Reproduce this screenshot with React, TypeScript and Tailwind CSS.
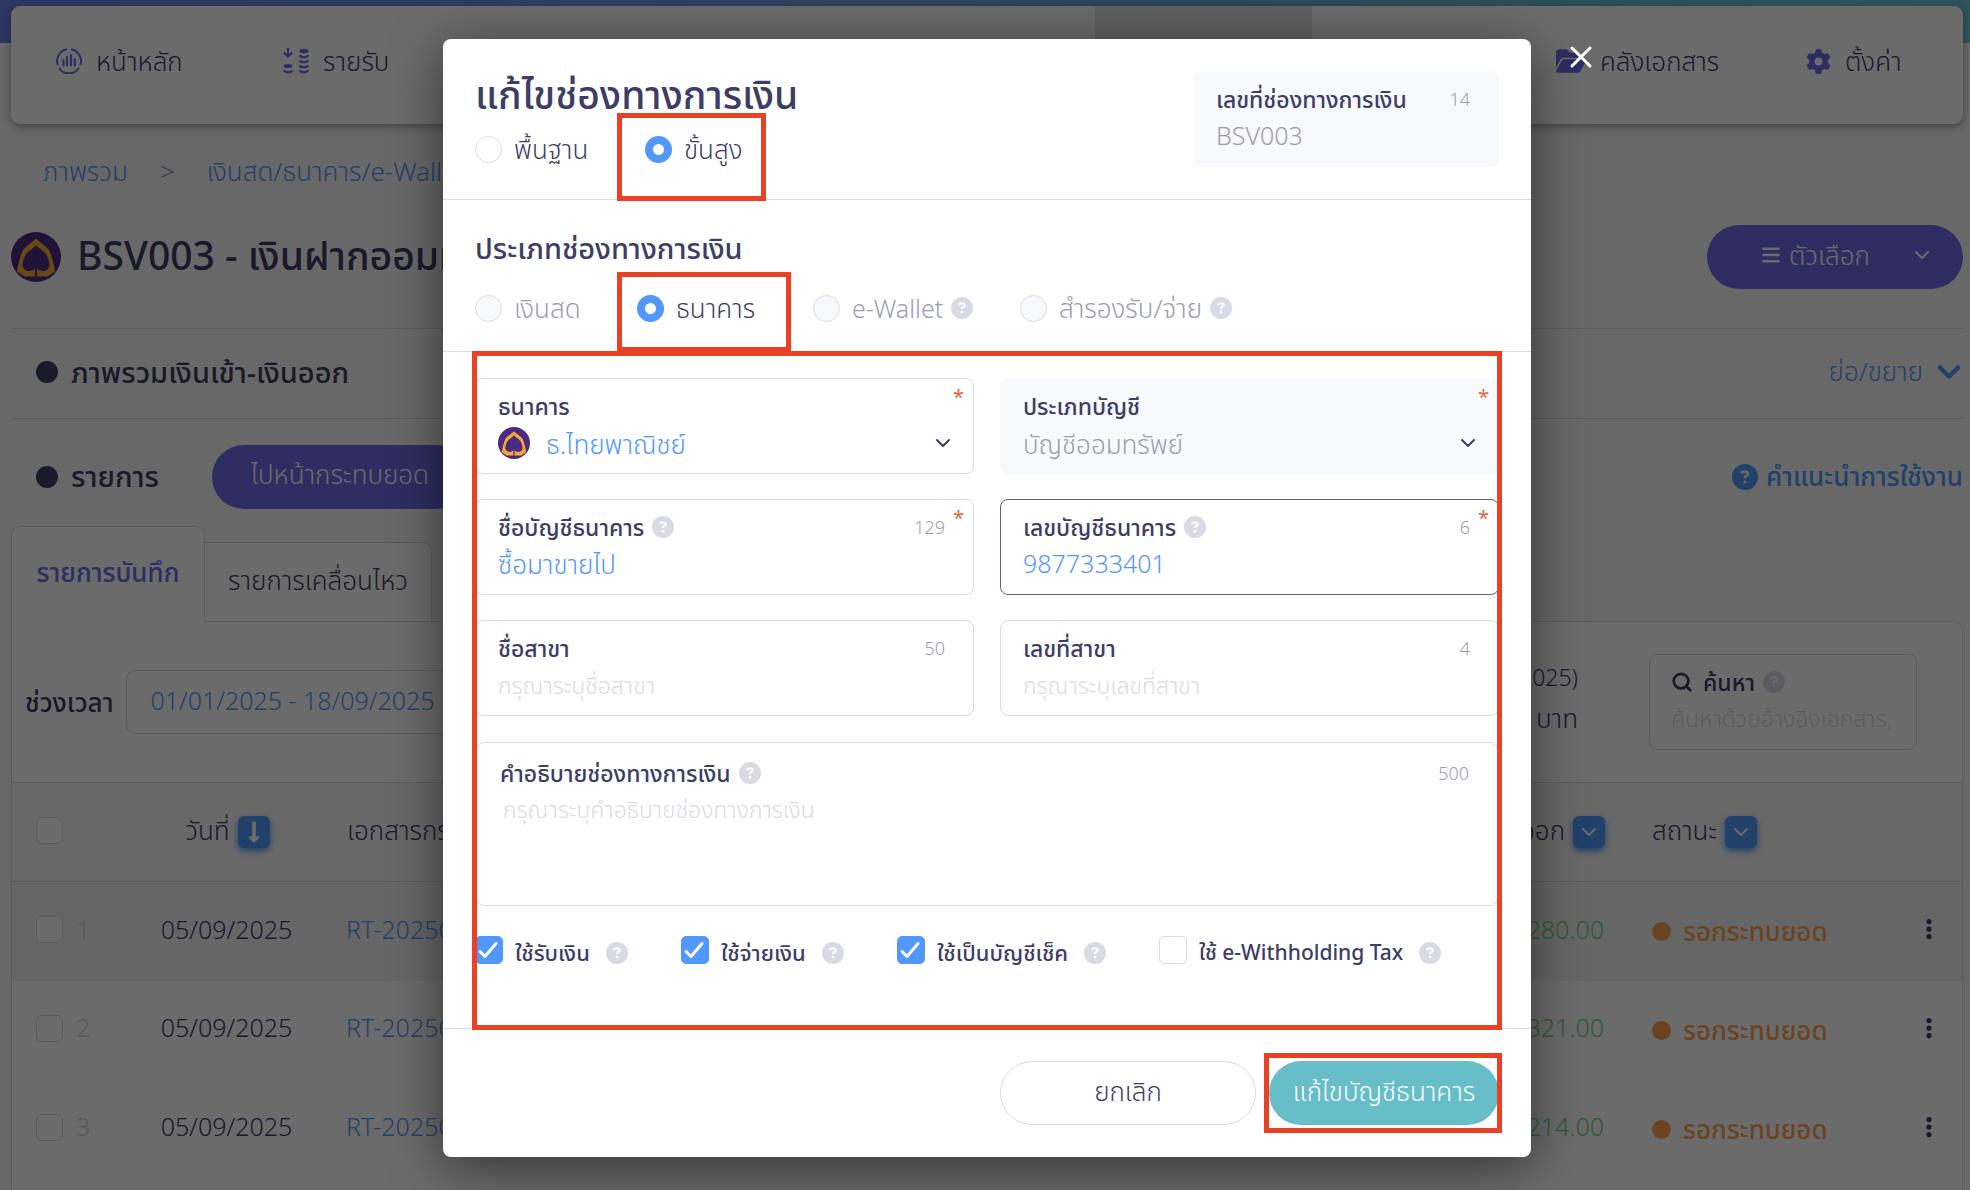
import React from 'react';
import { ChevronDown, Search, X } from 'lucide-react';
import { FaLongArrowAltDown } from 'react-icons/fa';
import { FaBars, FaCircleQuestion, FaEllipsisVertical, FaFolderOpen, FaGear } from 'react-icons/fa6';

const BankLogo = ({ className = '' }: { className?: string }) => (
  <svg viewBox="0 0 100 100" className={className} aria-hidden="true">
    <circle cx="50" cy="50" r="50" fill="#4a2b80" />
    <path d="M50 13 C57 20 69 27 77 37 C82 50 86 65 88 79 L73 89 H27 L12 79 C14 65 18 50 23 37 C31 27 43 20 50 13Z" fill="#f4a934" />
    <path d="M50 26 C56 33 65 38 70 44 C74 52 77 59 77 65 C77 73 70 79 62 78 C57 77 54 75 52 73 V90 H48 V73 C46 75 43 77 38 78 C30 79 23 73 23 65 C23 59 26 52 30 44 C35 38 44 33 50 26Z" fill="#4a2b80" />
  </svg>
);

const DashboardIcon = () => (
  <svg viewBox="0 0 26 26" className="size-[26px]" fill="none" stroke="currentColor" strokeWidth="2" aria-hidden="true">
    <path d="M15 1.2A12 12 0 0 1 24.3 17M11 1.2A12 12 0 0 0 1.7 17M3 20a12 12 0 0 0 20 0" />
    <path d="M7.5 12v5.500M11 9v8.500M15 7v10.500M18.800 11v6.500" strokeWidth="2.200" strokeLinecap="round" />
  </svg>
);

const IncomeIcon = () => (
  <svg viewBox="0 0 26 26" className="size-[26px]" fill="none" stroke="currentColor" strokeWidth="2.2" aria-hidden="true">
    <path d="M5 0v8M.8 4.500 5 8.500l4.200-4" />
    <ellipse cx="5" cy="18" rx="4.600" ry="2" fill="currentColor" stroke="none" />
    <ellipse cx="21" cy="3" rx="4.600" ry="2.200" fill="currentColor" stroke="none" />
    <path d="M.5 22.500c2 2.400 7 2.400 9 0M16.500 7.500c2 2.400 7 2.400 9 0M16.500 12.500c2 2.400 7 2.400 9 0M16.500 17.500c2 2.400 7 2.400 9 0M16.500 22.500c2 2.400 7 2.400 9 0" />
  </svg>
);

const Help = () => <FaCircleQuestion className="size-[22px] shrink-0 text-[#dadae6]" />;

// Callout frame drawn round its relative parent
const Highlight = ({ className }: { className: string }) => (
  <span className={`pointer-events-none absolute z-10 border-5 border-[#ea4025] ${className}`} />
);

interface FieldProps {
  id: string;
  label: string;
  count?: string;
  required?: boolean;
  help?: boolean;
  className?: string;
  children: React.ReactNode;
}

const Field: React.FC<FieldProps> = ({ id, label, count, required, help, className = 'border-[#dadae6]', children }) => (
  <div className={`relative h-24 rounded-lg border px-[22px] pt-[13px] ${className}`}>
    <div className="flex h-7 items-center gap-2">
      <label htmlFor={id} className="text-[23px] leading-7 font-medium whitespace-nowrap">{label}</label>
      {help && <Help />}
      {count && <span className="ml-auto pr-1.5 text-lg leading-7 font-light text-[#9c9cb2]">{count}</span>}
    </div>
    {required && <span className="absolute top-1 right-[9px] text-xl leading-7 text-[#e8633c]">*</span>}
    <div className="mt-[5px]">{children}</div>
  </div>
);

interface RadioProps {
  name: string;
  label: string;
  checked?: boolean;
  disabled?: boolean;
  help?: boolean;
  className?: string;
  frame?: string;
}

const Radio: React.FC<RadioProps> = ({ name, label, checked, disabled, help, className = 'text-[26px]', frame }) => (
  <div className={`relative flex items-center gap-2 ${className}`}>
    <label className={`flex items-center gap-3 leading-8 font-light whitespace-nowrap ${disabled ? 'text-[#9c9cb2]' : ''}`}>
      <input
        type="radio"
        name={name}
        defaultChecked={checked}
        disabled={disabled}
        className="size-[27px] shrink-0 appearance-none rounded-full border border-[#dadae6] bg-white checked:border-8 checked:border-[#5297fc] disabled:bg-[#f8f9fd]"
      />
      {label}
    </label>
    {help && <Help />}
    {frame && <Highlight className={frame} />}
  </div>
);

interface CheckProps {
  label: string;
  checked?: boolean;
  className?: string;
}

const Check: React.FC<CheckProps> = ({ label, checked, className = 'text-[22px]' }) => (
  <div className={`flex items-center gap-4 ${className}`}>
    <label className="flex items-center gap-3 leading-7 font-medium whitespace-nowrap">
      <span className="relative size-7 shrink-0">
        <input
          type="checkbox"
          defaultChecked={checked}
          className="peer block size-7 appearance-none rounded-[5px] border border-[#dadae6] bg-white checked:border-[#5297fc] checked:bg-[#5297fc]"
        />
        <svg viewBox="0 0 28 28" className="pointer-events-none absolute inset-0 hidden peer-checked:block" fill="none" stroke="white" strokeWidth="3" strokeLinecap="round" strokeLinejoin="round">
          <path d="m5 15.500 5 5L21 7.500" />
        </svg>
      </span>
      <span className="pt-1">{label}</span>
    </label>
    <span className="pt-1.5"><Help /></span>
  </div>
);

const HeaderButton = ({ label, children }: { label: string; children: React.ReactNode }) => (
  <button aria-label={label} className="mt-1 flex size-8 items-center justify-center rounded-md bg-[#4f98fc] text-white shadow-[0_3px_6px_#4f98fc]">
    {children}
  </button>
);

const rows = [
  { no: 1, date: '05/09/2025', doc: 'RT-20250900003', amount: '1,280.00' },
  { no: 2, date: '05/09/2025', doc: 'RT-20250900002', amount: '1,321.00' },
  { no: 3, date: '05/09/2025', doc: 'RT-20250900001', amount: '1,214.00' },
];

const tableBox = 'block size-[27px] appearance-none rounded-md border border-[#dadae6] bg-white';

const Nav = () => (
  <nav className="flex h-[118px] rounded-[9px] bg-white text-[26px] leading-8 font-light shadow-[0_3px_8px_rgba(0,0,0,0.35)]">
    <a href="#home" className="flex h-28 w-[227px] items-center gap-[14px] pb-0.5 pl-[45px]">
      <span className="text-[#6c6ce8]"><DashboardIcon /></span>
      หน้าหลัก
    </a>
    <a href="#income" className="flex h-28 w-[227px] items-center gap-[14px] pb-0.5 pl-[45px]">
      <span className="text-[#6c6ce8]"><IncomeIcon /></span>
      รายรับ
    </a>
    <div className="mr-[199px] ml-auto w-[217px] bg-[#e4e4e4]" />
    <a href="#documents" className="flex h-28 w-[251px] items-center gap-[14px] pb-0.5 pl-[45px]">
      <FaFolderOpen className="size-[30px] text-[#6c6ce8]" />
      คลังเอกสาร
    </a>
    <a href="#settings" className="flex h-28 w-[201px] items-center gap-[14px] pb-0.5 pl-[44px]">
      <FaGear className="size-[25px] text-[#6c6ce8]" />
      ตั้งค่า
    </a>
  </nav>
);

const AccountPage = () => (
  <div className="flex h-full flex-col">
    <div className="absolute inset-x-0 top-0 h-[43px] bg-linear-to-r from-[#6f80ec] to-[#6acad8]" />
    <div className="relative flex flex-1 flex-col pt-1.5 pr-[7px] pl-[11px]">
      <Nav />

      <div className="flex h-[101px] items-center gap-8 pb-2 pl-8 text-[26px] leading-8 font-light text-[#4f98fc]">
        <a href="#overview">ภาพรวม</a>
        <span className="text-[#9c9cb2]">&gt;</span>
        <a href="#channels">เงินสด/ธนาคาร/e-Wallet</a>
      </div>

      <div className="flex h-16 items-center">
        <BankLogo className="size-[50px]" />
        <h1 className="pb-1 pl-4 text-[39px] leading-[60px] font-medium">BSV003 - เงินฝากออมทรัพย์</h1>
        <button className="ml-auto flex h-16 w-64 items-center gap-2 rounded-full bg-[#6c6ce8] pb-1 pl-[54px] text-[26px] font-light text-white">
          <FaBars className="size-[20px]" />
          ตัวเลือก
          <ChevronDown className="mr-[29px] ml-auto size-[24px]" />
        </button>
      </div>

      <section className="mt-[39px] flex h-[90px] items-center border-t border-[#dadae6] pb-1 pl-[25px]">
        <span className="size-[22px] rounded-full bg-[#403e66]" />
        <h2 className="pl-[13px] text-[29px] leading-10 font-medium">ภาพรวมเงินเข้า-เงินออก</h2>
        <button className="ml-auto flex items-center gap-2 text-[26px] font-light text-[#4f98fc]">
          ย่อ/ขยาย
          <ChevronDown className="-mr-1 size-9" strokeWidth={3} />
        </button>
      </section>

      <section className="flex h-[108px] items-center border-t border-[#dadae6] pt-2 pl-[25px]">
        <span className="size-[22px] rounded-full bg-[#403e66]" />
        <h2 className="pb-0.5 pl-[13px] text-[29px] leading-10 font-medium">รายการ</h2>
        <button className="ml-[53px] h-16 w-64 rounded-full bg-[#6c6ce8] pb-1 text-[26px] font-light text-white">ไปหน้ากระทบยอด</button>
        <a href="#guide" className="ml-auto flex items-center gap-2 text-[26px] font-medium text-[#4f98fc]">
          <FaCircleQuestion className="size-[26px]" />
          คำแนะนำการใช้งาน
        </a>
      </section>

      <div className="relative z-1 -mb-px flex items-end text-[26px]">
        <button className="h-24 w-[194px] rounded-t-[9px] border border-b-0 border-[#dadae6] bg-white pb-1 font-medium text-[#6c6ce8]">รายการบันทึก</button>
        <button className="h-20 w-[227px] rounded-tr-[9px] border border-l-0 border-[#dadae6] bg-white pb-1 font-light">รายการเคลื่อนไหว</button>
      </div>

      <div className="flex flex-1 flex-col rounded-tr-[9px] border border-b-0 border-[#dadae6] bg-white">
        <div className="flex h-[160px] items-center pr-[45px] pl-[13px]">
          <label htmlFor="range" className="text-[26px] font-medium">ช่วงเวลา</label>
          <input id="range" defaultValue="01/01/2025 - 18/09/2025" className="ml-[13px] h-16 w-[360px] rounded-[9px] border border-[#dadae6] px-[23px] pb-1 text-[25px] font-light text-[#4f98fc]" />
          <div className="ml-auto pb-2.5 text-right font-light">
            <p className="text-[23px] leading-[42px]">ยอดคงเหลือ (18/09/2025)</p>
            <p className="text-[26px] leading-10">0.00 &nbsp;บาท</p>
          </div>
          <div className="ml-[71px] h-24 w-[268px] rounded-lg border border-[#dadae6] px-[21px] pt-[13px]">
            <label htmlFor="search" className="flex h-7 items-center gap-2 text-[23px] font-medium">
              <Search className="mr-0.5 size-[22px]" strokeWidth={3} />
              ค้นหา
              <Help />
            </label>
            <input id="search" placeholder="ค้นหาด้วยอ้างอิงเอกสาร," className="mt-1 h-9 w-full text-[23px] font-light placeholder:text-[#dadae6]" />
          </div>
        </div>

        <table className="w-full table-fixed text-[25px] font-light">
          <colgroup>
            <col className="w-[114px]" />
            <col className="w-[203px]" />
            <col />
            <col className="w-[300px]" />
            <col className="w-[268px]" />
            <col className="w-[66px]" />
          </colgroup>
          <thead>
            <tr className="h-[99px] border-y border-[#dadae6] bg-[#f7f7f8] text-[26px]">
              <th className="pb-1 pl-6"><input type="checkbox" aria-label="เลือกทั้งหมด" className={tableBox} /></th>
              <th className="pb-1 font-light">
                <div className="flex items-center justify-center gap-2">
                  วันที่
                  <HeaderButton label="เรียงวันที่"><FaLongArrowAltDown className="size-6" /></HeaderButton>
                </div>
              </th>
              <th className="pb-1 pl-[18px] text-left font-light">เอกสารกระทบยอด</th>
              <th className="pr-[23px] pb-1 font-light">
                <div className="flex items-center justify-end gap-2">
                  เงินออก
                  <HeaderButton label="กรองเงินออก"><ChevronDown className="size-6" /></HeaderButton>
                </div>
              </th>
              <th className="pb-1 pl-6 font-light">
                <div className="flex items-center gap-2">
                  สถานะ
                  <HeaderButton label="กรองสถานะ"><ChevronDown className="size-6" /></HeaderButton>
                </div>
              </th>
              <th />
            </tr>
          </thead>
          <tbody>
            {rows.map((row) => (
              <tr key={row.no} className="h-[99px] first:bg-[#f4f4f5]">
                <td className="pb-1 pl-6">
                  <label className="flex items-center gap-[13px] text-[#cfcfd8]">
                    <input type="checkbox" className={tableBox} />
                    {row.no}
                  </label>
                </td>
                <td className="pr-0.5 pb-1 text-center">{row.date}</td>
                <td className="pb-1 pl-[17px] text-[#4f98fc]"><a href="#doc">{row.doc}</a></td>
                <td className="pr-6 pb-1 text-right text-[#6bd683]">{row.amount}</td>
                <td className="pl-6">
                  <div className="flex items-center gap-3 text-[26px] font-medium text-[#fca252]">
                    <span className="size-[19px] rounded-full bg-[#fca252]" />
                    รอกระทบยอด
                  </div>
                </td>
                <td className="pb-1">
                  <button aria-label="เมนู" className="flex w-full justify-center"><FaEllipsisVertical className="size-6" /></button>
                </td>
              </tr>
            ))}
          </tbody>
        </table>
      </div>
    </div>
  </div>
);

const EditModal = () => (
  <div role="dialog" aria-labelledby="modal-title" className="relative w-[1088px] rounded-lg bg-white shadow-[0_10px_50px_rgba(0,0,0,0.5)]">
    <button aria-label="ปิด" className="absolute top-0 -right-[68px] text-white">
      <X className="size-9" strokeWidth={2} />
    </button>

    <header className="flex h-[161px] justify-between border-b border-[#dadae6] px-8 pt-8">
      <div>
        <h1 id="modal-title" className="text-[39px] leading-[46px] font-medium">แก้ไขช่องทางการเงิน</h1>
        <div className="mt-4 flex">
          <Radio name="mode" label="พื้นฐาน" className="w-[170px] text-[26px]" />
          <Radio name="mode" label="ขั้นสูง" checked className="w-[97px] text-[26px]" frame="-top-5 -right-6 -bottom-9 -left-7" />
        </div>
      </div>
      <div className="h-24 w-[305px] rounded-lg bg-[#f8f9fd] px-[22px] pt-[14px]">
        <div className="flex h-7 items-center justify-between">
          <label htmlFor="code" className="text-[23px] leading-7 font-medium">เลขที่ช่องทางการเงิน</label>
          <span className="pr-[7px] text-lg leading-7 font-light text-[#9c9cb2]">14</span>
        </div>
        <input id="code" disabled defaultValue="BSV003" className="mt-[5px] block h-9 w-full text-[25px] font-light text-[#9c9cb2]" />
      </div>
    </header>

    <section className="h-[152px] border-b border-[#dadae6] px-8 pt-[30px]">
      <h2 className="text-[29px] leading-9 font-medium">ประเภทช่องทางการเงิน</h2>
      <div className="mt-[26px] flex">
        <Radio name="type" label="เงินสด" disabled className="w-[162px] text-[26px]" />
        <Radio name="type" label="ธนาคาร" checked className="w-[176px] text-[26px]" frame="-top-5 right-[22px] -bottom-7 -left-5" />
        <Radio name="type" label="e-Wallet" disabled help className="w-[207px] text-[25px]" />
        <Radio name="type" label="สำรองรับ/จ่าย" disabled help />
      </div>
    </section>

    <section className="relative h-[677px] border-b border-[#dadae6] px-8 pt-[26px]">
      <Highlight className="-top-px right-[29px] -bottom-0.5 left-[29px]" />
      <div className="grid grid-cols-2 gap-x-[26px] gap-y-[25px]">
        <Field id="bank" label="ธนาคาร" required>
          <div className="relative flex items-center gap-4">
            <BankLogo className="size-8" />
            <select id="bank" className="h-9 flex-1 appearance-none text-[26px] font-light text-[#5297fc]">
              <option>ธ.ไทยพาณิชย์</option>
            </select>
            <ChevronDown className="pointer-events-none absolute -right-1 size-6" />
          </div>
        </Field>
        <Field id="account-type" label="ประเภทบัญชี" required className="border-transparent bg-[#f8f9fd]">
          <div className="relative flex items-center">
            <select id="account-type" disabled className="h-9 flex-1 appearance-none text-[26px] font-light text-[#9c9cb2] opacity-100">
              <option>บัญชีออมทรัพย์</option>
            </select>
            <ChevronDown className="pointer-events-none absolute -right-1 size-6" />
          </div>
        </Field>
        <Field id="account-name" label="ชื่อบัญชีธนาคาร" count="129" required help>
          <input id="account-name" defaultValue="ซื้อมาขายไป" className="block h-9 w-full text-[26px] font-light text-[#5297fc] outline-none" />
        </Field>
        <Field id="account-no" label="เลขบัญชีธนาคาร" count="6" required help className="border-[#625f80]">
          <input id="account-no" defaultValue="9877333401" className="block h-9 w-full text-[25px] font-light text-[#5297fc] outline-none" />
        </Field>
        <Field id="branch-name" label="ชื่อสาขา" count="50">
          <input id="branch-name" placeholder="กรุณาระบุชื่อสาขา" className="block h-9 w-full text-[23px] font-light placeholder:text-[#dadae6]" />
        </Field>
        <Field id="branch-no" label="เลขที่สาขา" count="4">
          <input id="branch-no" placeholder="กรุณาระบุเลขที่สาขา" className="block h-9 w-full text-[23px] font-light placeholder:text-[#dadae6]" />
        </Field>
      </div>

      <div className="mt-[26px] h-[164px] rounded-[10px] border border-[#dadae6] px-6 pt-4">
        <div className="flex h-7 items-center gap-2">
          <label htmlFor="note" className="text-[23px] leading-7 font-medium">คำอธิบายช่องทางการเงิน</label>
          <Help />
          <span className="ml-auto pr-[5px] text-lg leading-7 font-light text-[#9c9cb2]">500</span>
        </div>
        <textarea id="note" placeholder="กรุณาระบุคำอธิบายช่องทางการเงิน" className="mt-1 block h-[100px] w-full resize-none pl-[3px] text-[23px] leading-9 font-light placeholder:text-[#dadae6]" />
      </div>

      <div className="mt-7 flex">
        <Check label="ใช้รับเงิน" checked className="w-[206px] text-[22px]" />
        <Check label="ใช้จ่ายเงิน" checked className="w-[216px] text-[22px]" />
        <Check label="ใช้เป็นบัญชีเช็ค" checked className="w-[262px] text-[22px]" />
        <Check label="ใช้ e-Withholding Tax" className="text-[21px]" />
      </div>
    </section>

    <footer className="flex h-32 items-center justify-end gap-[13px] px-8">
      <button className="h-16 w-64 rounded-full border border-[#dadae6] pb-1 text-[26px] font-light">ยกเลิก</button>
      <div className="relative">
        <button className="h-16 w-[230px] rounded-full bg-[#67bec9] pb-1 text-[26px] font-light text-white">แก้ไขบัญชีธนาคาร</button>
        <Highlight className="-inset-y-2 -right-[3px] -left-[5px]" />
      </div>
    </footer>
  </div>
);

export default function App() {
  return (
    <div className="relative h-screen overflow-hidden bg-[#f7f7fa] font-['Noto_Sans','Noto_Sans_Thai',sans-serif] text-[#3d3d66]">
      <AccountPage />
      <div className="absolute inset-0 z-20 flex items-start justify-center bg-black/58 pt-[39px] pl-1">
        <EditModal />
      </div>
    </div>
  );
}
